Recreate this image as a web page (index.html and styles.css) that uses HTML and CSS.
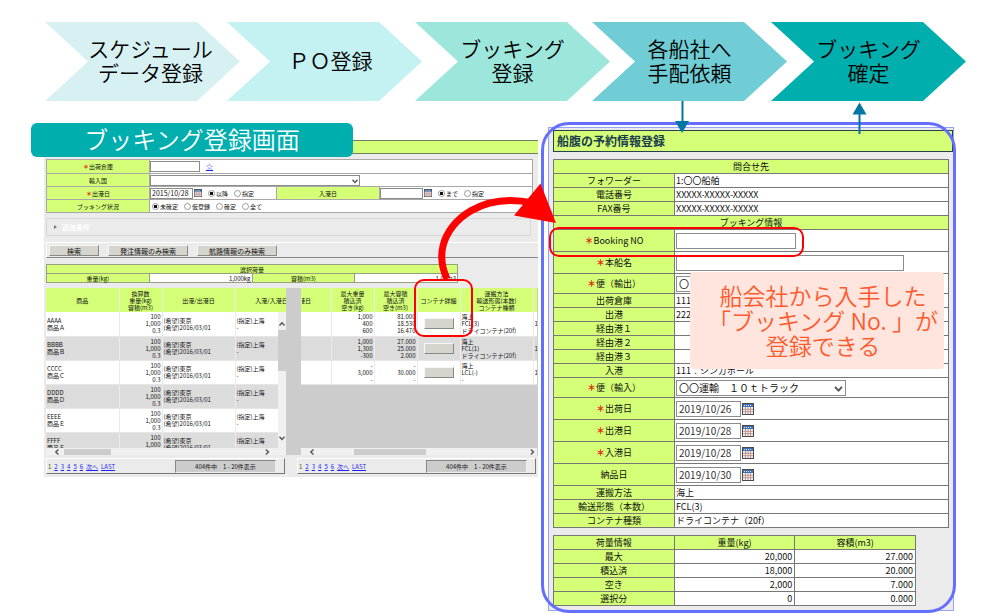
FILE: index.html
```html
<!DOCTYPE html>
<html lang="ja">
<head>
<meta charset="utf-8">
<title>ブッキング登録画面</title>
<link rel="stylesheet" href="styles.css">
</head>
<body>
<svg class="defs" width="0" height="0" aria-hidden="true">
  <symbol id="calendar" viewBox="0 0 12 12">
    <rect width="12" height="12" fill="#4a4a4a"/>
    <rect x="1" y="1" width="10" height="3" fill="#3f6fb5"/>
    <rect x="1" y="4" width="10" height="7" fill="#f4f4f4"/>
    <path d="M3.5 4v7M6 4v7M8.5 4v7M1 6.3h10M1 8.7h10" stroke="#b5837f" stroke-width=".8"/>
    <path d="M2 2.5h8" stroke="#dbe6f5" stroke-width="1" stroke-dasharray="1 1"/>
  </symbol>
  <symbol id="up" viewBox="0 0 8 8"><path d="M1.500 5.500 4 2.800 6.500 5.500" fill="none" stroke="#555" stroke-width="1.400"/></symbol>
  <symbol id="down" viewBox="0 0 8 8"><path d="M1.500 2.800 4 5.500 6.500 2.800" fill="none" stroke="#555" stroke-width="1.400"/></symbol>
  <symbol id="left" viewBox="0 0 8 8"><path d="M5.500 1.500 2.800 4 5.500 6.500" fill="none" stroke="#555" stroke-width="1.400"/></symbol>
  <symbol id="right" viewBox="0 0 8 8"><path d="M2.800 1.500 5.500 4 2.800 6.500" fill="none" stroke="#555" stroke-width="1.400"/></symbol>
</svg>
<div class="page">
  <ol class="steps">
    <li class="step step-schedule">スケジュール<br>データ登録</li>
    <li class="step step-po">ＰＯ登録</li>
    <li class="step step-booking">ブッキング<br>登録</li>
    <li class="step step-request">各船社へ<br>手配依頼</li>
    <li class="step step-confirm">ブッキング<br>確定</li>
  </ol>

  <main class="screens">
    <section class="list-screen">
      <h1 class="badge">ブッキング登録画面</h1>
      <div class="titlebar"></div>
      <table class="search-form">
        <colgroup><col class="c-label"><col class="c-first"><col class="c-label"><col></colgroup>
        <tr class="first"><th><label for="wh"><b>＊</b>出荷倉庫</label></th><td colspan="3"><div class="line"><input id="wh" class="field f-wh"><a href="#" class="star">☆</a></div></td></tr>
        <tr><th><label for="country">輸入国</label></th><td colspan="3"><div class="line"><span class="select-wrap country-wrap"><select id="country"><option></option></select><svg class="chev"><use href="#down"/></svg></span></div></td></tr>
        <tr><th><label for="dep"><b>＊</b>出港日</label></th>
          <td><div class="line"><input id="dep" class="field f-date" value="2015/10/28"><button class="cal" aria-label="出港日カレンダー"><svg><use href="#calendar"/></svg></button>
            <label><input type="radio" name="d" checked>以降</label><label><input type="radio" name="d">指定</label></div></td>
          <th><label for="arr">入港日</label></th>
          <td><div class="line"><input id="arr" class="field f-date"><button class="cal" aria-label="入港日カレンダー"><svg><use href="#calendar"/></svg></button>
            <label><input type="radio" name="a" checked>まで</label><label><input type="radio" name="a">指定</label></div></td></tr>
        <tr><th>ブッキング状況</th><td colspan="3"><div class="line status">
          <label><input type="radio" name="s" checked>未確定</label><label><input type="radio" name="s">仮登録</label><label><input type="radio" name="s">確定</label><label><input type="radio" name="s">全て</label></div></td></tr>
      </table>
      <div class="extra"><i class="tri"></i>追加条件</div>
      <div class="actions">
        <button class="btn b-short">検索</button><button class="btn">発注情報のみ検索</button><button class="btn">航路情報のみ検索</button>
      </div>
      <table class="summary">
        <tr><th colspan="4">選択荷量</th></tr>
        <tr><th>重量(kg)</th><td>1,000kg</td><th>容積(m3)</th><td>1.00m3</td></tr>
      </table>

      <div class="grids">
        <div class="pane pane-left">
          <div class="pane-view">
            <table class="grid grid-left">
              <colgroup><col class="w73"><col class="w43"><col class="w73"><col class="w73"></colgroup>
              <thead><tr><th>商品</th><th>換算数<br>重量(kg)<br>容積(m3)</th><th>出港/出港日</th><th>入港/入港日</th></tr></thead>
              <tbody>
              <tr><td>AAAA<br>商品Ａ</td><td class="n">100<br>1,000<br>0.3</td><td>(希望)東京<br>(希望)2016/03/01</td><td>(指定)上海<br>-</td></tr>
              <tr><td>BBBB<br>商品Ｂ</td><td class="n">100<br>1,000<br>0.3</td><td>(希望)東京<br>(希望)2016/03/01</td><td>(指定)上海<br>-</td></tr>
              <tr><td>CCCC<br>商品Ｃ</td><td class="n">100<br>1,000<br>0.3</td><td>(希望)東京<br>(希望)2016/03/01</td><td>(指定)上海<br>-</td></tr>
              <tr><td>DDDD<br>商品Ｄ</td><td class="n">100<br>1,000<br>0.3</td><td>(希望)東京<br>(希望)2016/03/01</td><td>(指定)上海<br>-</td></tr>
              <tr><td>EEEE<br>商品Ｅ</td><td class="n">100<br>1,000<br>0.3</td><td>(希望)東京<br>(希望)2016/03/01</td><td>(指定)上海<br>-</td></tr>
              <tr><td>FFFF<br>商品Ｆ</td><td class="n">100<br>1,000<br>0.3</td><td>(希望)東京<br>(希望)2016/03/01</td><td>(指定)上海<br>-</td></tr>
              </tbody>
            </table>
            <div class="vscroll"><svg><use href="#up"/></svg><i></i><svg><use href="#down"/></svg></div>
          </div>
          <div class="hscroll hs-left"><svg><use href="#left"/></svg><i></i><svg><use href="#right"/></svg></div>
        </div>
        <div class="pane">
          <div class="pane-view">
            <table class="grid grid-right">
              <colgroup><col class="w30"><col class="w43"><col class="w43"><col class="w43"><col class="w73"><col class="w10"></colgroup>
              <thead><tr><th><span class="cut">入港日</span></th><th>最大重量<br>積込済<br>空き(kg)</th><th>最大容積<br>積込済<br>空き(m3)</th><th>コンテナ詳細</th><th>運搬方法<br>輸送形態(本数)<br>コンテナ種類</th><th></th></tr></thead>
              <tbody>
              <tr><td></td><td class="n">1,000<br>400<br>600</td><td class="n">81.000<br>18.530<br>16.470</td><td class="c"><button class="btn detail" aria-label="コンテナ詳細"></button></td><td>海上<br>FCL(3)<br>ドライコンテナ(20f)</td><td>1</td></tr>
              <tr><td></td><td class="n">1,000<br>1,300<br>-300</td><td class="n">27.000<br>25.000<br>2.000</td><td class="c"><button class="btn detail" aria-label="コンテナ詳細"></button></td><td>海上<br>FCL(1)<br>ドライコンテナ(20f)</td><td>1</td></tr>
              <tr><td></td><td class="n">-<br>3,000<br>-</td><td class="n">-<br>30.000<br>-</td><td class="c"><button class="btn detail" aria-label="コンテナ詳細"></button></td><td>海上<br>LCL(-)<br>-</td><td>1</td></tr>
              </tbody>
            </table>
          </div>
          <div class="hscroll hs-right"><svg><use href="#left"/></svg><i></i><svg><use href="#right"/></svg></div>
        </div>
      </div>
      <div class="pagers">
        <nav class="pager"><div class="links"><span>1</span><a href="#">2</a><a href="#">3</a><a href="#">4</a><a href="#">5</a><a href="#">6</a><a href="#">次へ</a><a href="#">LAST</a></div><span class="count">404件中　1 - 20件表示</span></nav>
        <nav class="pager"><div class="links"><span>1</span><a href="#">2</a><a href="#">3</a><a href="#">4</a><a href="#">5</a><a href="#">6</a><a href="#">次へ</a><a href="#">LAST</a></div><span class="count">404件中　1 - 20件表示</span></nav>
      </div>
      <div class="mark mark-detail"></div>
    </section>

    <section class="booking">
      <div class="booking-screen">
        <h2 class="booking-title">船腹の予約情報登録</h2>
        <table class="info">
          <colgroup><col class="k"><col></colgroup>
          <tr><th colspan="2">問合せ先</th></tr>
          <tr><th>フォワーダー</th><td>1:〇〇船舶</td></tr>
          <tr><th>電話番号</th><td>XXXXX-XXXXX-XXXXX</td></tr>
          <tr><th>FAX番号</th><td>XXXXX-XXXXX-XXXXX</td></tr>
          <tr><th colspan="2">ブッキング情報</th></tr>
          <tr class="tall"><th><label for="bno"><b>＊</b>Booking NO</label></th><td><input id="bno" class="input i-no"></td></tr>
          <tr class="tall"><th><label for="ship"><b>＊</b>本船名</label></th><td><input id="ship" class="input i-ship"></td></tr>
          <tr class="mid"><th><label for="exp"><b>＊</b>便（輸出）</label></th><td><span class="select-wrap"><select id="exp" class="input i-sel"><option>〇</option></select></span></td></tr>
          <tr><th>出荷倉庫</th><td>111</td></tr>
          <tr><th>出港</th><td>222</td></tr>
          <tr><th>経由港１</th><td></td></tr>
          <tr><th>経由港２</th><td></td></tr>
          <tr><th>経由港３</th><td></td></tr>
          <tr><th>入港</th><td>111：シンガポール</td></tr>
          <tr class="mid"><th><label for="imp"><b>＊</b>便（輸入）</label></th><td><span class="select-wrap"><select id="imp" class="input i-sel"><option>〇〇運輸　１０ｔトラック</option></select><svg class="chev chev-big"><use href="#down"/></svg></span></td></tr>
          <tr class="tall"><th><label for="d1"><b>＊</b>出荷日</label></th><td><div class="date"><input id="d1" class="input i-date" value="2019/10/26"><button class="cal cal-big" aria-label="カレンダー"><svg><use href="#calendar"/></svg></button></div></td></tr>
          <tr class="tall"><th><label for="d2"><b>＊</b>出港日</label></th><td><div class="date"><input id="d2" class="input i-date" value="2019/10/28"><button class="cal cal-big" aria-label="カレンダー"><svg><use href="#calendar"/></svg></button></div></td></tr>
          <tr class="tall"><th><label for="d3"><b>＊</b>入港日</label></th><td><div class="date"><input id="d3" class="input i-date" value="2019/10/28"><button class="cal cal-big" aria-label="カレンダー"><svg><use href="#calendar"/></svg></button></div></td></tr>
          <tr class="tall"><th><label for="d4">納品日</label></th><td><div class="date"><input id="d4" class="input i-date" value="2019/10/30"><button class="cal cal-big" aria-label="カレンダー"><svg><use href="#calendar"/></svg></button></div></td></tr>
          <tr><th>運搬方法</th><td>海上</td></tr>
          <tr><th>輸送形態（本数）</th><td>FCL(3)</td></tr>
          <tr><th>コンテナ種類</th><td>ドライコンテナ（20f）</td></tr>
        </table>
        <table class="info load">
          <tr><th>荷量情報</th><th>重量(kg)</th><th>容積(m3)</th></tr>
          <tr><th>最大</th><td>20,000</td><td>27.000</td></tr>
          <tr><th>積込済</th><td>18,000</td><td>20.000</td></tr>
          <tr><th>空き</th><td>2,000</td><td>7.000</td></tr>
          <tr><th>選択分</th><td>0</td><td>0.000</td></tr>
        </table>
      </div>
      <div class="frame"></div>
      <div class="mark mark-no"></div>
      <p class="callout">船会社から入手した<br>「ブッキング No. 」が<br>登録できる</p>
    </section>
  </main>

  <svg class="arrows" viewBox="0 0 1000 615" width="1000" height="615" aria-hidden="true">
    <path d="M447 279C442 268 440 258 443 246C449 220 482 192 533 203" fill="none" stroke="#f00" stroke-width="7"/>
    <path d="M540.500 183.500 556 223 514 215.500Z" fill="#f00"/>
    <path d="M682.500 101v22M859.500 112v22" stroke="#0077a3" stroke-width="2"/>
    <path d="M675 121h14l-7 12zM852.500 114.500h14l-7-12z" fill="#0077a3"/>
  </svg>
</div>
</body>
</html>
```
FILE: styles.css
```css
* { box-sizing: border-box; }

:root {
  --lime: #d4ff77;
  --panel: #ebebeb;
  --teal: #00aeae;
}

body {
  margin: 0;
  background: #fff;
  color: #111;
  font-family: "Noto Sans CJK JP", sans-serif;
}

input, select, button { font: inherit; color: inherit; margin: 0; border-radius: 0; }
.defs { position: absolute; }
.page { position: relative; }

/* process steps */
.steps {
  display: grid;
  grid-template-columns: minmax(0, 182fr) minmax(0, 188fr) minmax(0, 177fr) minmax(0, 179fr) minmax(0, 195fr);
  list-style: none;
  margin: 0;
  padding: 22px 34px 21px 45px;
}
.step {
  display: flex;
  align-items: center;
  justify-content: center;
  width: 195px;
  height: 79px;
  padding-bottom: 4px;
  font-size: 21px;
  line-height: 24px;
  font-weight: 350;
  text-align: center;
  color: #000;
  clip-path: polygon(0 0, 152px 0, 100% 50%, 152px 100%, 0 100%, 43px 50%);
}
.step-schedule { background: #d7f1f3; padding-left: 16px; }
.step-po { background: #c4f1f2; padding-left: 12px; }
.step-booking { background: #9ce6dc; }
.step-request { background: #70cdd5; }
.step-confirm { background: var(--teal); }

.screens {
  display: grid;
  grid-template-columns: minmax(0, 494fr) minmax(0, 415fr);
  gap: 3px;
  align-items: start;
  padding: 0 44px;
}

/* booking list screen */
.list-screen {
  position: relative;
  margin-top: 18px;
  padding-bottom: 3px;
  background: var(--panel);
  font-size: 6px;
  line-height: 7px;
}
.badge {
  position: absolute;
  left: -13px;
  top: -17px;
  width: 322px;
  margin: 0;
  padding-bottom: 3px;
  border-radius: 6px;
  background: var(--teal);
  color: #fff;
  font-size: 24px;
  line-height: 31px;
  font-weight: 350;
  text-align: center;
}
.titlebar {
  height: 14px;
  border: solid #6f7f62;
  border-width: 1px 0;
  background: var(--lime);
}
table { border-collapse: collapse; table-layout: fixed; }
th { font-weight: 400; background: var(--lime); padding: 0; }
th b { color: #e02010; font-weight: 700; }

.search-form { width: calc(100% - 7px); margin: 5px 5px 5px 2px; }
.search-form tr { height: 13px; }
.search-form .first { height: 14px; }
.search-form th, .search-form td { border: 1px solid #a8a8a8; }
.search-form td { padding: 0; background: #fff; }
.c-label { width: 103px; }
.c-first { width: 127px; }
.line { display: flex; align-items: center; height: 12px; gap: 6px; }
.line label { display: flex; align-items: center; gap: 1px; }
.status { padding-left: 2px; }
.field {
  height: 11px;
  padding: 0 1px;
  border: 1px solid #8c8c8c;
  background: #fff;
}
.f-wh { width: 50px; }
.f-date { width: 43px; font-size: 7px; margin-right: -5px; }
.star { color: #22f; font-size: 7px; }
.line input[type="radio"] {
  appearance: none;
  width: 7px;
  height: 7px;
  border: 1px solid #999;
  border-radius: 50%;
  background: #fff;
}
.line input[type="radio"]:checked { background: radial-gradient(circle, #111 45%, #fff 50%); }
.cal { display: flex; width: 8px; height: 8px; padding: 0; border: 0; background: none; }
.cal svg { width: 100%; height: 100%; }
.select-wrap { position: relative; display: flex; }
.select-wrap select { appearance: none; background: #fff; border: 1px solid #8c8c8c; }
.country-wrap select { width: 210px; height: 11px; padding: 0; }
.chev { position: absolute; right: 1px; top: 2px; width: 8px; height: 8px; }

.extra {
  display: flex;
  align-items: center;
  gap: 5px;
  height: 18px;
  margin: 0 7px 6px 2px;
  padding-left: 7px;
  border: 1px solid #d8d8d8;
  color: #fff;
  font-size: 7px;
  font-weight: 700;
}
.tri { border: solid transparent; border-width: 2px 0 2px 3px; border-left-color: #777; }
.actions {
  display: flex;
  gap: 9px;
  height: 16px;
  margin-left: 2px;
  padding: 2px;
  border: solid;
  border-width: 1px 0 1px 1px;
  border-color: #fff transparent #888 #fff;
}
.btn {
  width: 80px;
  height: 11px;
  padding: 0;
  border: 1px solid;
  border-color: #f6f6f6 #888 #888 #f6f6f6;
  background: #d5d5ce;
  font-size: 7px;
  line-height: 8px;
}
.b-short { width: 50px; }

.summary { width: 412px; margin: 6px 0 5px 2px; }
.summary th, .summary td { height: 9px; padding: 0; border: 1px solid #97a080; }
.summary td { padding-right: 1px; background: #fff; text-align: right; }

.grids {
  display: grid;
  grid-template-columns: 240px minmax(0, 1fr);
  gap: 15px;
  margin-left: 2px;
  padding-right: 1px;
  background: #ccc;
}
.pane-view { position: relative; height: 160px; overflow: hidden; }
.grid th, .grid td { height: 24px; padding: 0 1px; border-right: 1px solid var(--panel); overflow: hidden; white-space: nowrap; }
.grid td { border-bottom: 1px solid #e6e6e6; }
.grid-left { width: 262px; }
.grid-right { width: 242px; }
.w73 { width: 73px; }
.w43 { width: 43px; }
.w30 { width: 30px; }
.w10 { width: 10px; }
.grid tbody tr { background: #fff; }
.grid tbody tr:nth-child(even) { background: #dcdcdc; }
.grid .n { text-align: right; }
.grid .c { text-align: center; }
.grid .cut { display: flex; justify-content: flex-end; width: 9px; overflow: hidden; }
.detail { display: block; width: 30px; margin: 0 auto; }
.vscroll {
  position: absolute;
  right: 0;
  top: 24px;
  bottom: 0;
  display: flex;
  flex-direction: column;
  justify-content: space-between;
  width: 8px;
  padding: 8px 0 6px;
  background: #f0f0f0;
}
.vscroll svg, .hscroll svg { width: 8px; height: 8px; flex: none; }
.vscroll i { height: 41px; margin: 2px 0 auto; background: #ccc; }
.hscroll { display: flex; align-items: center; height: 7px; background: #f0f0f0; }
.hscroll i { height: 6px; background: #ccc; margin-right: auto; }
.hs-left { padding: 0 15px 0 7px; }
.hs-left i { width: 47px; margin-left: 3px; }
.hs-right { padding: 0 1px 0 7px; }
.hs-right i { width: 72px; margin-left: 38px; }

.pagers { display: grid; grid-template-columns: 1fr 1fr; gap: 12px; margin: 3px 2px 0; }
.pager {
  display: flex;
  align-items: center;
  justify-content: space-between;
  height: 16px;
  padding: 0 8px 0 1px;
  border: 1px solid;
  border-color: #fff #777 #777 #fff;
}
.links { display: flex; gap: 3px; color: #360; }
.links a { color: #22f; }
.count {
  width: 101px;
  padding: 2px 0;
  border: 1px solid;
  border-color: #888 #eee #eee #888;
  background: #ccc;
  text-align: center;
}

/* booking detail screen */
.booking { position: relative; padding: 5px 2px 2px 7px; }
.booking-screen {
  padding: 2px 0 4px 4px;
  border: 1px solid #98a4f2;
  background: var(--panel);
  font-size: 9px;
  line-height: 12px;
}
.booking-title {
  margin: 0 0 7px;
  padding: 0 3px;
  border: 1px solid #26424a;
  background: var(--lime);
  color: #1b3c4c;
  font-size: 12px;
  line-height: 20px;
  font-weight: 700;
}
.info { width: calc(100% - 4px); }
.info tr { height: 14px; }
.info th, .info td { border: 1px solid #777; }
.info td { padding: 0 1px; background: #fff; }
.info .tall { height: 22px; }
.info .mid { height: 20px; }
.k { width: 121px; }
.input { height: 16px; padding: 0 2px; border: 1px solid #8c8c8c; background: #fff; font-size: 10px; }
input.input { display: block; }
.i-no { width: 120px; }
.i-ship { width: 228px; }
.i-date { width: 65px; color: #333; }
.select-wrap .i-sel { width: 170px; }
.date { display: flex; align-items: center; gap: 1px; }
.cal-big { width: 12px; height: 12px; }
.chev-big { left: 157px; top: 3px; width: 11px; height: 11px; }
.load { width: 363px; margin-top: 7px; }
.load td { padding-right: 2px; text-align: right; }

/* annotations over both screens */
.frame {
  position: absolute;
  inset: 0;
  border: 3px solid #656fff;
  border-radius: 28px;
}
.mark { position: absolute; border: 2px solid #f00; }
.mark-detail { left: 370px; top: 139px; width: 59px; height: 58px; border-radius: 10px; }
.mark-no { left: 8px; top: 105px; width: 255px; height: 30px; border-radius: 10px; }
.callout {
  position: absolute;
  left: 149px;
  top: 150px;
  width: 254px;
  margin: 0;
  padding: 11px 0 11px 12px;
  border-radius: 4px;
  background: #ffe5de;
  color: #ff5a2c;
  font-size: 23px;
  line-height: 25px;
  font-weight: 350;
  text-align: center;
  white-space: nowrap;
}
.arrows { position: absolute; left: 0; top: 0; pointer-events: none; }
```
